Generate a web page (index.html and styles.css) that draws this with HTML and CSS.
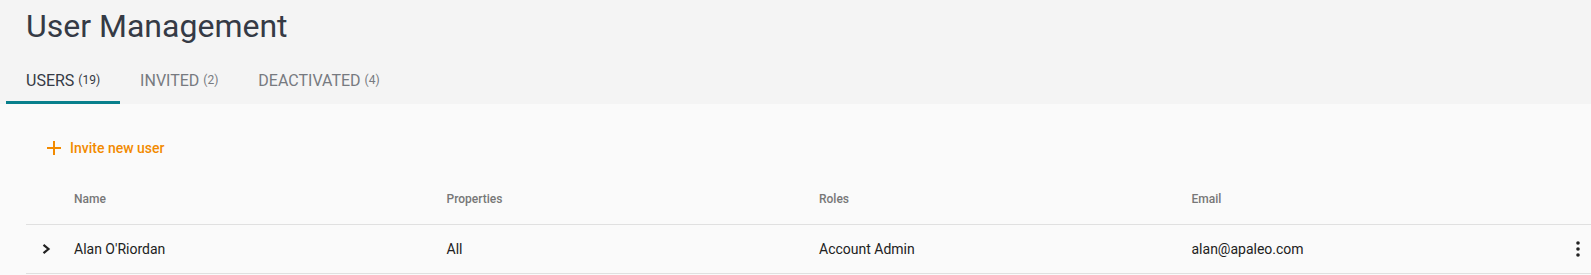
FILE: index.html
```html
<!DOCTYPE html>
<html>
<head>
  <meta charset="UTF-8" />
  <title>User Management</title>
  <link rel="stylesheet" href="styles.css">
</head>
<body>

<div class="page-header">
  <h1 class="page-title">User Management</h1>

  <!-- Onglets -->
  <div class="tabs">
    <div class="tab active">USERS <span class="count">(19)</span></div>
    <div class="tab">INVITED <span class="count">(2)</span></div>
    <div class="tab">DEACTIVATED <span class="count">(4)</span></div>
  </div>
</div>

<div class="content">
  <button class="invite-btn">
    <svg width="24" height="24" viewBox="0 0 24 24"><path d="M19 13h-6v6h-2v-6H5v-2h6V5h2v6h6v2z" fill="currentColor"/></svg>
    Invite new user
  </button>

  <div class="users-table">
    <div class="row head">
      <div></div>
      <div>Name</div>
      <div>Properties</div>
      <div>Roles</div>
      <div>Email</div>
      <div></div>
    </div>

    <div class="row">
      <div class="expand">
        <svg width="12" height="12" viewBox="0 0 12 12"><polyline points="3.5,1.8 8.5,6 3.5,10.2" fill="none" stroke="currentColor" stroke-width="2.2"/></svg>
      </div>
      <div>Alan O'Riordan</div>
      <div>All</div>
      <div>Account Admin</div>
      <div>alan@apaleo.com</div>
      <div class="actions">
        <svg width="24" height="24" viewBox="0 0 24 24">
          <circle cx="12" cy="6" r="1.8" fill="currentColor"/>
          <circle cx="12" cy="12" r="1.8" fill="currentColor"/>
          <circle cx="12" cy="18" r="1.8" fill="currentColor"/>
        </svg>
      </div>
    </div>
  </div>
</div>

</body>
</html>
```

FILE: styles.css
```css
body {
  margin: 0;
  font-family: Roboto, "Liberation Sans", sans-serif;
  background-color: #fafafa;
  color: #212121;
}

.page-header {
  background-color: #f4f4f4;
  padding-top: 6px;
}

.page-title {
  margin: 0 0 0 26px;
  font-size: 32px;
  font-weight: 400;
  line-height: 40px;
  color: #353a45;
}

.tabs {
  display: flex;
  margin-top: 10px;
  padding-left: 6px;
}

.tab {
  height: 48px;
  padding: 3px 20px 0;
  display: flex;
  align-items: center;
  gap: 4px;
  font-size: 16px;
  color: #777a80;
  box-sizing: border-box;
  border-bottom: 3px solid transparent;
}

.tab.active {
  color: #353a45;
  border-bottom-color: #087f8c;
}

.count {
  font-size: 12px;
}

.content {
  padding: 26px 0 0 26px;
}

.invite-btn {
  display: flex;
  align-items: center;
  gap: 4px;
  height: 36px;
  padding: 0 0 0 16px;
  border: none;
  background: none;
  font-family: inherit;
  font-size: 14px;
  font-weight: 500;
  color: #f28a00;
  cursor: pointer;
}

.users-table {
  margin-top: 2px;
}

.row {
  display: grid;
  grid-template-columns: 48px repeat(4, 372.5px) 1fr;
  align-items: center;
  height: 49px;
  border-bottom: 1px solid #e0e0e0;
  font-size: 14px;
  box-sizing: border-box;
}

.row.head {
  height: 57px;
  font-size: 12px;
  font-weight: 500;
  color: #777;
  padding-top: 6px;
}

.expand {
  padding-left: 14px;
  display: flex;
  color: #222;
}

.actions {
  display: flex;
  justify-content: center;
  color: #222;
}
```
